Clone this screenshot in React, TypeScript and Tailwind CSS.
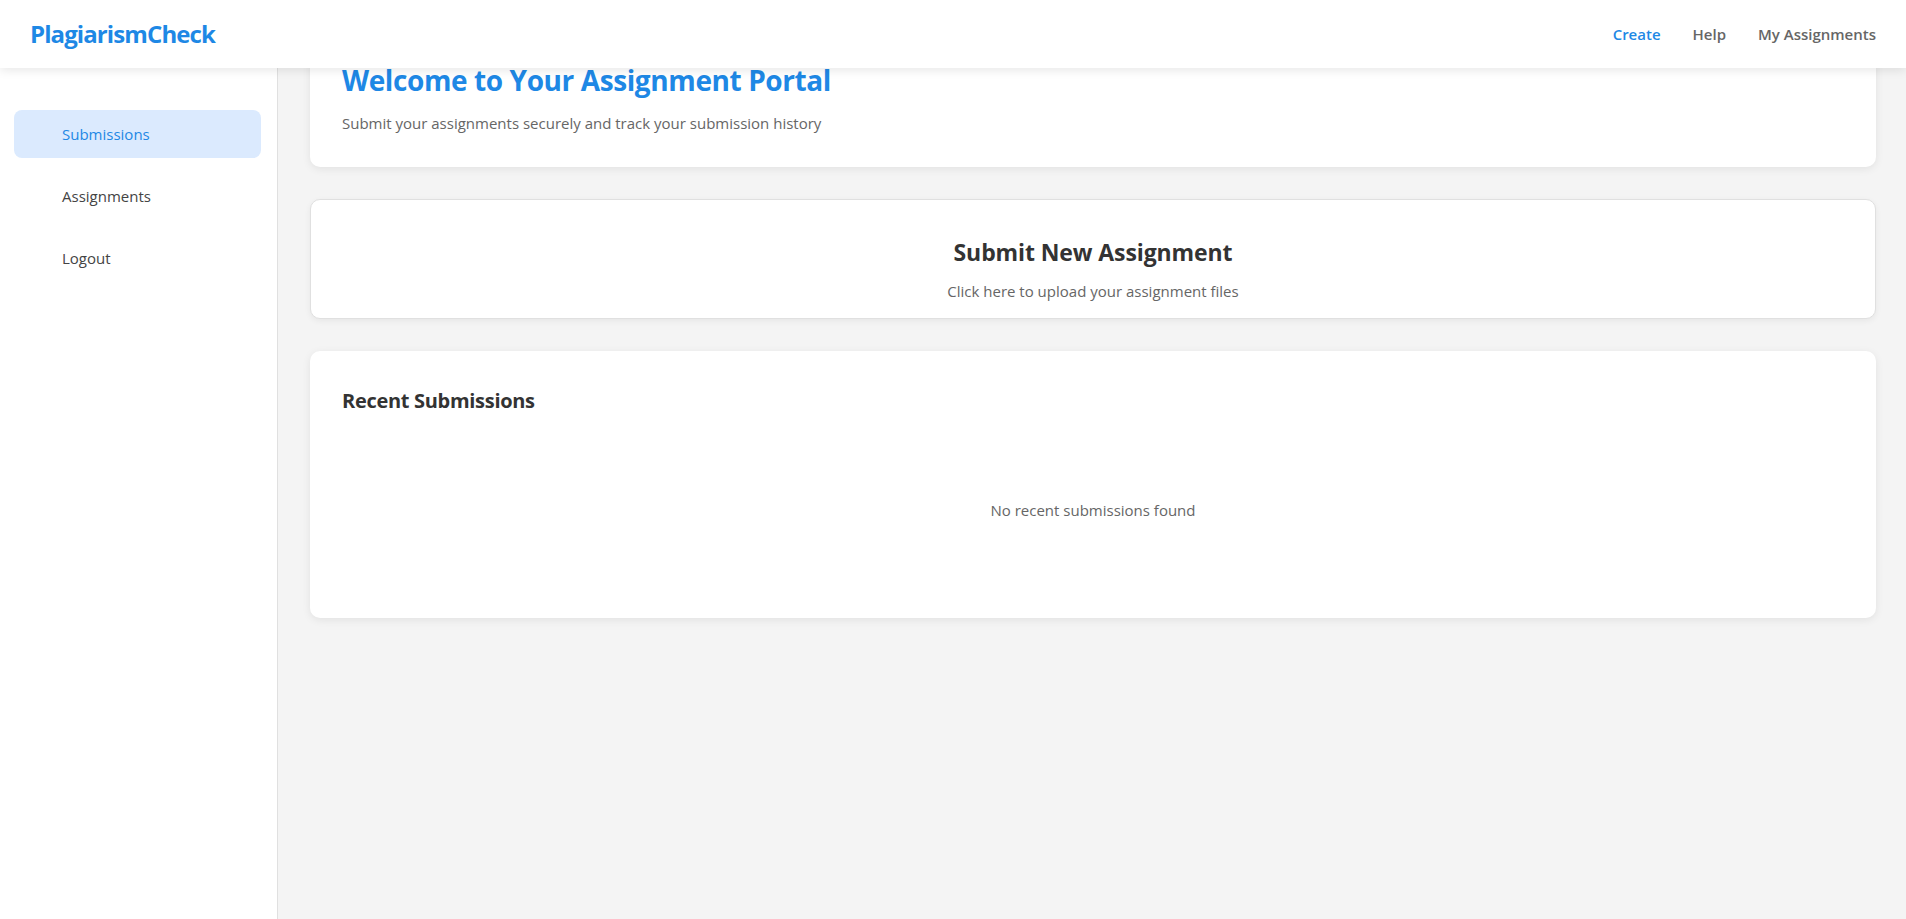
import React from "react";

const font = { fontFamily: '"Open Sans", "Noto Sans", Arial, sans-serif' };

export default function App() {
  return (
    <div className="relative h-screen w-full overflow-hidden bg-[#f4f4f4]" style={font}>
      <header className="absolute left-0 right-0 top-0 z-10 flex h-[68px] items-center justify-between bg-white px-[30px] shadow-[0_2px_10px_rgba(0,0,0,0.1)]">
        <div className="text-[24px] font-bold text-[#1e88e5] tracking-[-0.9px]">PlagiarismCheck</div>
        <nav className="flex items-center gap-8 text-[15px] font-semibold">
          <a className="text-[#1e88e5]">Create</a>
          <a className="text-[#666]">Help</a>
          <a className="text-[#666]">My Assignments</a>
        </nav>
      </header>
      <div className="flex h-full">
        <aside className="flex w-[278px] shrink-0 flex-col gap-[14px] border-r border-[#e0e0e0] bg-white pl-[14px] pr-[16px] pt-[110px]">
          <div className="flex h-12 items-center rounded-lg bg-[#dbeafe] pl-12 text-[15px] font-medium text-[#1e88e5]">Submissions</div>
          <div className="flex h-12 items-center rounded-lg pl-12 text-[15px] text-[#444]">Assignments</div>
          <div className="flex h-12 items-center rounded-lg pl-12 text-[15px] text-[#444]">Logout</div>
        </aside>
        <main className="flex flex-1 flex-col gap-8 pl-8 pr-[30px] pt-[28px]">
          <section className="rounded-[10px] bg-white px-8 pb-8 pt-8 shadow-[0_2px_8px_rgba(0,0,0,0.08)]">
            <h1 className="mb-[11px] text-[28px] font-bold leading-[40px] tracking-[-0.4px] text-[#1e88e5]">Welcome to Your Assignment Portal</h1>
            <p className="text-[15px] leading-[24px] text-[#666]">Submit your assignments securely and track your submission history</p>
          </section>
          <section className="rounded-[10px] border border-[#e0e0e0] bg-white pb-[15px] pt-[36px] text-center shadow-[0_2px_6px_rgba(0,0,0,0.06)]">
            <h2 className="text-[23px] font-bold leading-[32px] tracking-[-0.1px] text-[#333]">Submit New Assignment</h2>
            <p className="mt-[11px] text-[15px] leading-[24px] text-[#666]">Click here to upload your assignment files</p>
          </section>
          <section className="rounded-[10px] bg-white px-8 pb-8 pt-[36px] shadow-[0_2px_8px_rgba(0,0,0,0.08)]">
            <h3 className="mb-[19px] text-[20px] font-bold leading-[28px] tracking-[-0.3px] text-[#333]">Recent Submissions</h3>
            <div className="py-16 text-center text-[15px] leading-[24px] text-[#666]">No recent submissions found</div>
          </section>
        </main>
      </div>
    </div>
  );
}
